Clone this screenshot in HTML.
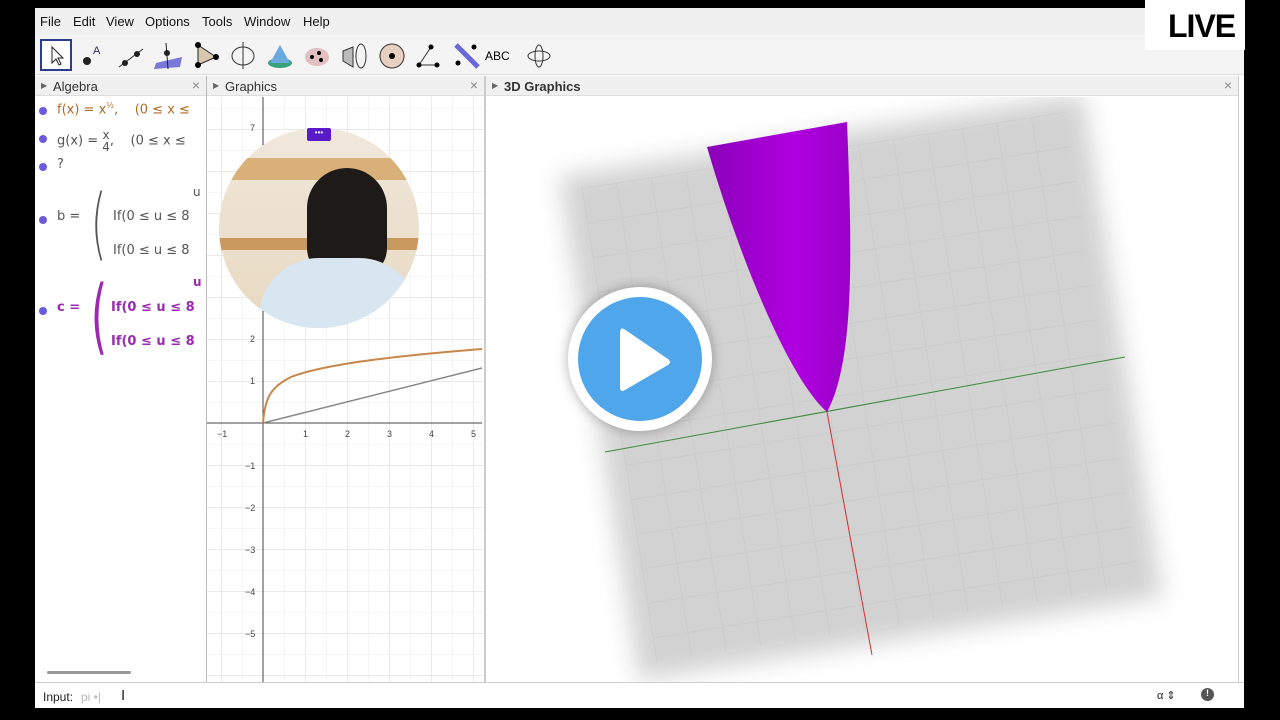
<!DOCTYPE html>
<html><head><meta charset="utf-8"><style>
*{margin:0;padding:0;box-sizing:border-box}
body{width:1280px;height:720px;background:#000;position:relative;overflow:hidden;font-family:"Liberation Sans",sans-serif}
.app{position:absolute;left:35px;top:8px;width:1209px;height:700px;background:#fff}
.menu{position:absolute;left:0;top:0;height:27px;width:100%;background:#f0f0f0;font-size:13px;color:#111}
.menu span{position:absolute;top:6px}
.tb{position:absolute;top:27px;left:0;width:100%;height:40px;background:#f4f4f4;border-bottom:1px solid #ddd}
.tool{position:absolute;top:4px;width:32px;height:32px}
.hdr{position:absolute;top:68px;height:20px;background:#f0f0f0;border-bottom:1px solid #ddd;font-size:13px;color:#333}
.hdr b{font-weight:normal;position:absolute;left:18px;top:3px}
.hdr i{position:absolute;left:6px;top:5px;font-style:normal;font-size:8px;color:#666}
.hdr s{position:absolute;right:6px;top:1px;text-decoration:none;color:#888;font-size:14px}
.alg{position:absolute;left:0;top:89px;width:171px;height:585px;background:#fff;font-family:"DejaVu Sans",sans-serif;font-size:13px;overflow:hidden}
.dot{position:absolute;left:4px;width:8px;height:8px;border-radius:50%;background:#6a5bd8}
.t{position:absolute;white-space:nowrap}
</style></head><body>
<div class="app">
<div class="menu"><span style="left:5px">File</span><span style="left:38px">Edit</span><span style="left:71px">View</span><span style="left:110px">Options</span><span style="left:167px">Tools</span><span style="left:209px">Window</span><span style="left:268px">Help</span></div>
<div class="tb">
<div class="tool" style="left:5px;border:2px solid #2a3d8f;background:#fff"><svg width="28" height="28"><path d="M10 6 L10 22 L14 18 L17 24 L19 23 L16 17 L21 17 Z" fill="#fff" stroke="#222"/></svg></div>
<svg class="tool" style="left:42px"><circle cx="10" cy="22" r="4" fill="#222"/><text x="16" y="15" font-size="11" fill="#335">A</text></svg>
<svg class="tool" style="left:80px"><line x1="4" y1="28" x2="28" y2="10" stroke="#333"/><circle cx="10" cy="24" r="3" fill="#222"/><circle cx="22" cy="15" r="3" fill="#222"/></svg>
<svg class="tool" style="left:117px"><polygon points="4,24 30,18 28,28 2,30" fill="#7a78d8"/><line x1="14" y1="4" x2="16" y2="30" stroke="#222"/><circle cx="15" cy="14" r="3" fill="#222"/></svg>
<svg class="tool" style="left:155px"><polygon points="8,6 26,18 8,26" fill="#d9c8b0" stroke="#222"/><circle cx="8" cy="6" r="3"/><circle cx="26" cy="18" r="3"/><circle cx="8" cy="26" r="3"/></svg>
<svg class="tool" style="left:192px"><ellipse cx="16" cy="17" rx="11" ry="9" fill="none" stroke="#333"/><line x1="16" y1="3" x2="16" y2="30" stroke="#333"/></svg>
<svg class="tool" style="left:229px"><ellipse cx="16" cy="24" rx="12" ry="5" fill="#3aa07a"/><polygon points="16,6 6,24 26,24" fill="#6aa8e0"/></svg>
<svg class="tool" style="left:266px"><ellipse cx="16" cy="18" rx="12" ry="9" fill="#e0c0c0"/><circle cx="11" cy="18" r="2"/><circle cx="18" cy="14" r="2"/><circle cx="20" cy="21" r="2"/></svg>
<svg class="tool" style="left:304px"><polygon points="4,12 14,8 14,28 4,22" fill="#bbb" stroke="#333"/><ellipse cx="22" cy="17" rx="5" ry="12" fill="none" stroke="#333"/></svg>
<svg class="tool" style="left:341px"><circle cx="16" cy="17" r="12" fill="#e8cfc0" stroke="#333"/><circle cx="16" cy="17" r="3"/></svg>
<svg class="tool" style="left:378px"><path d="M6 26 L24 26 M6 26 L18 8" stroke="#333" fill="none"/><circle cx="18" cy="8" r="2.5"/><circle cx="6" cy="26" r="2.5"/><circle cx="24" cy="26" r="2.5"/></svg>
<svg class="tool" style="left:415px"><line x1="6" y1="6" x2="28" y2="28" stroke="#6a68d8" stroke-width="5"/><circle cx="8" cy="24" r="2.5"/><circle cx="24" cy="8" r="2.5"/></svg>
<div class="tool" style="left:450px;font-size:12px;padding-top:10px">ABC</div>
<svg class="tool" style="left:488px"><ellipse cx="16" cy="17" rx="11" ry="5" fill="none" stroke="#333"/><ellipse cx="16" cy="17" rx="4" ry="11" fill="none" stroke="#333"/></svg>
</div>
<div class="hdr" style="left:0;width:171px"><i>▶</i><b>Algebra</b><s>×</s></div>
<div class="hdr" style="left:172px;width:277px"><i>▶</i><b>Graphics</b><s>×</s></div>
<div class="hdr" style="left:451px;width:752px"><i>▶</i><b style="font-weight:bold;color:#333">3D Graphics</b><s>×</s></div>
<div style="position:absolute;left:171px;top:68px;width:1px;height:606px;background:#bbb"></div>
<div style="position:absolute;left:449px;top:68px;width:2px;height:606px;background:#ccc"></div>
<div style="position:absolute;left:1203px;top:68px;width:1px;height:606px;background:#ccc"></div>
<div class="alg">
<div class="dot" style="top:10px"></div><div class="t" style="left:22px;top:4px;color:#b06a28">f(x) = x<sup style="font-size:8px">½</sup>,&nbsp;&nbsp;&nbsp; (0 ≤ x ≤</div>
<div class="dot" style="top:38px"></div><div class="t" style="left:22px;top:32px;color:#555">g(x) = <span style="display:inline-block;text-align:center;vertical-align:middle;font-size:12px;line-height:12px">x<br>4</span>,&nbsp;&nbsp;&nbsp; (0 ≤ x ≤</div>
<div class="dot" style="top:66px"></div><div class="t" style="left:22px;top:60px;color:#555">?</div>
<div class="dot" style="top:119px"></div><div class="t" style="left:22px;top:112px;color:#555">b =</div>
<div class="t" style="left:56px;top:82px;color:#555;font-size:78px;transform:scaleX(.5);transform-origin:left;font-weight:100">(</div>
<div class="t" style="left:158px;top:88px;color:#555;font-size:12px">u</div>
<div class="t" style="left:78px;top:112px;color:#555">If(0 ≤ u ≤ 8</div>
<div class="t" style="left:78px;top:146px;color:#555">If(0 ≤ u ≤ 8</div>
<div class="dot" style="top:210px"></div><div class="t" style="left:22px;top:203px;color:#9a2ab0;font-weight:bold">c =</div>
<div class="t" style="left:56px;top:172px;color:#9a2ab0;font-size:82px;transform:scaleX(.5);transform-origin:left">(</div>
<div class="t" style="left:158px;top:178px;color:#9a2ab0;font-size:12px;font-weight:bold">u</div>
<div class="t" style="left:76px;top:203px;color:#9a2ab0;font-weight:bold">If(0 ≤ u ≤ 8</div>
<div class="t" style="left:76px;top:237px;color:#9a2ab0;font-weight:bold">If(0 ≤ u ≤ 8</div>
<div style="position:absolute;left:12px;top:574px;width:84px;height:3px;background:#999;border-radius:2px"></div>
</div>
<svg style="position:absolute;left:172px;top:89px" width="277" height="585">
<defs><pattern id="g" width="21" height="21" patternUnits="userSpaceOnUse" x="14" y="11"><path d="M0 0H21M0 0V21" stroke="#ececec"/></pattern>
<pattern id="G" width="42" height="42" patternUnits="userSpaceOnUse" x="14" y="32"><path d="M0 0H42M0 0V42" stroke="#d6d6d6"/></pattern></defs>
<rect width="277" height="585" fill="url(#g)"/><rect width="277" height="585" fill="url(#G)"/>
<line x1="56" y1="0" x2="56" y2="585" stroke="#444"/><line x1="0" y1="326" x2="275" y2="326" stroke="#444"/>
<g font-size="9" fill="#444" font-family="Liberation Sans"><text x="10" y="340">−1</text><text x="96" y="340">1</text><text x="138" y="340">2</text><text x="180" y="340">3</text><text x="222" y="340">4</text><text x="264" y="340">5</text>
<text x="43" y="287">1</text><text x="43" y="245">2</text><text x="43" y="34">7</text><text x="38" y="372">−1</text><text x="38" y="414">−2</text><text x="38" y="456">−3</text><text x="38" y="498">−4</text><text x="38" y="540">−5</text></g>
<path d="M56 326 C58 300 64 290 84 280 C120 266 200 258 275 252" stroke="#c8874a" stroke-width="2" fill="none"/>
<line x1="56" y1="326" x2="275" y2="271" stroke="#888" stroke-width="1.5"/>
</svg>
<div style="position:absolute;left:184px;top:120px;width:200px;height:200px;border-radius:50%;overflow:hidden;background:linear-gradient(#f0e8dc,#e8d8c0)">
<div style="position:absolute;left:0;top:30px;width:200px;height:22px;background:#d8b078"></div>
<div style="position:absolute;left:0;top:110px;width:200px;height:12px;background:#c89a60"></div>
<div style="position:absolute;left:88px;top:40px;width:80px;height:110px;border-radius:40px 40px 30px 30px;background:#1e1a18"></div>
<div style="position:absolute;left:40px;top:130px;width:160px;height:90px;border-radius:60px 60px 0 0;background:#d8e6f2"></div>
</div>
<div style="position:absolute;left:272px;top:120px;width:24px;height:13px;background:#5a1ac8;border-radius:2px;color:#fff;font-size:8px;text-align:center">•••</div>
<div style="position:absolute;left:451px;top:89px;width:752px;height:585px;overflow:hidden;background:#fff">
<div style="position:absolute;left:110px;top:35px;width:530px;height:510px;transform:rotate(-9deg);background:#d2d2d2;filter:blur(12px)"></div>
<div style="position:absolute;left:130px;top:50px;width:490px;height:480px;transform:rotate(-9deg);background-image:linear-gradient(#c4c4c4 1px,transparent 1px),linear-gradient(90deg,#c4c4c4 1px,transparent 1px);background-size:35px 35px;opacity:.45"></div>
<svg width="752" height="585" style="position:absolute;left:0;top:0">
<line x1="119" y1="355" x2="639" y2="260" stroke="#3a8a3a"/>
<line x1="341" y1="315" x2="386" y2="558" stroke="#d03030"/>
<defs><linearGradient id="p" x1="0" x2="1"><stop offset="0" stop-color="#8a00b8"/><stop offset=".6" stop-color="#b000e0"/><stop offset="1" stop-color="#9a00c8"/></linearGradient></defs>
<path d="M221 50 L361 25 C366 153 369 263 341 315 C304 283 254 163 221 50 Z" fill="url(#p)"/>
</svg>
</div>
<div style="position:absolute;left:533px;top:279px;width:144px;height:144px;border-radius:50%;background:#fff;box-shadow:0 0 12px rgba(0,0,0,.3)"></div>
<div style="position:absolute;left:543px;top:289px;width:124px;height:124px;border-radius:50%;background:#4fa6ea"></div>
<svg style="position:absolute;left:533px;top:279px" width="144" height="144"><path d="M56 42 Q52 40 52 46 L52 100 Q52 106 57 103 L100 78 Q104 75 100 72 Z" fill="#fff"/></svg>
<div style="position:absolute;left:0;top:674px;width:1209px;height:26px;background:#fff;border-top:1px solid #ccc;font-size:12px;color:#222">
<span style="position:absolute;left:8px;top:7px">Input:</span><span style="position:absolute;left:46px;top:7px;color:#bbb">pi •|</span>
<span style="position:absolute;left:86px;top:4px;font-size:15px">I</span>
<span style="position:absolute;left:1122px;top:6px;font-size:11px">α ⇕</span>
<span style="position:absolute;left:1166px;top:5px;width:13px;height:13px;border-radius:50%;background:#555;color:#fff;font-size:9px;text-align:center;font-weight:bold">!</span>
</div>
</div>
<div style="position:absolute;left:1145px;top:0;width:100px;height:50px;background:#fff"></div>
<div style="position:absolute;left:1168px;top:8px;font-size:32px;font-weight:bold;color:#000;letter-spacing:-1px">LIVE</div>
</body></html>
